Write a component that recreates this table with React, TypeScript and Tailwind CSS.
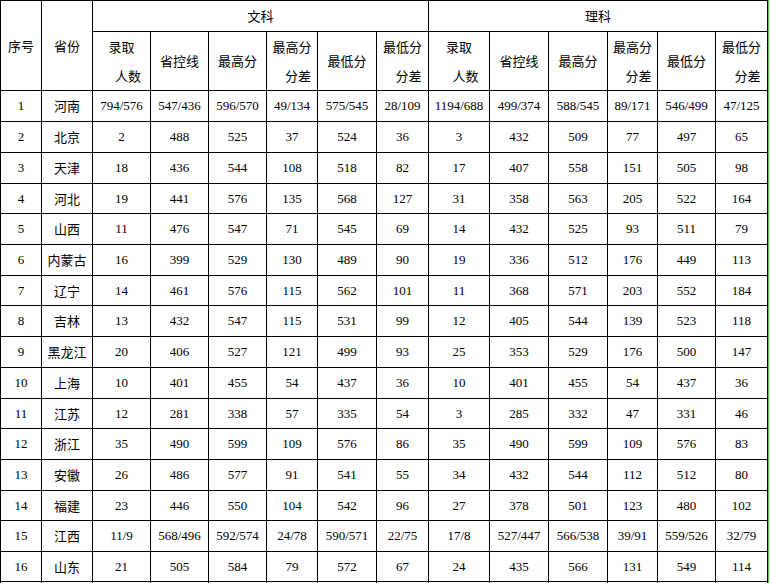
const cn = "font-['Noto_Sans_CJK_SC',sans-serif] text-[13px] text-black";
const num = "font-['Liberation_Serif','Noto_Sans_CJK_SC',serif] text-[13px] text-black";

type Row = [string, string, string[], string[]];

const rows: Row[] = [
  ['1', '河南', ['794/576', '547/436', '596/570', '49/134', '575/545', '28/109'], ['1194/688', '499/374', '588/545', '89/171', '546/499', '47/125']],
  ['2', '北京', ['2', '488', '525', '37', '524', '36'], ['3', '432', '509', '77', '497', '65']],
  ['3', '天津', ['18', '436', '544', '108', '518', '82'], ['17', '407', '558', '151', '505', '98']],
  ['4', '河北', ['19', '441', '576', '135', '568', '127'], ['31', '358', '563', '205', '522', '164']],
  ['5', '山西', ['11', '476', '547', '71', '545', '69'], ['14', '432', '525', '93', '511', '79']],
  ['6', '内蒙古', ['16', '399', '529', '130', '489', '90'], ['19', '336', '512', '176', '449', '113']],
  ['7', '辽宁', ['14', '461', '576', '115', '562', '101'], ['11', '368', '571', '203', '552', '184']],
  ['8', '吉林', ['13', '432', '547', '115', '531', '99'], ['12', '405', '544', '139', '523', '118']],
  ['9', '黑龙江', ['20', '406', '527', '121', '499', '93'], ['25', '353', '529', '176', '500', '147']],
  ['10', '上海', ['10', '401', '455', '54', '437', '36'], ['10', '401', '455', '54', '437', '36']],
  ['11', '江苏', ['12', '281', '338', '57', '335', '54'], ['3', '285', '332', '47', '331', '46']],
  ['12', '浙江', ['35', '490', '599', '109', '576', '86'], ['35', '490', '599', '109', '576', '83']],
  ['13', '安徽', ['26', '486', '577', '91', '541', '55'], ['34', '432', '544', '112', '512', '80']],
  ['14', '福建', ['23', '446', '550', '104', '542', '96'], ['27', '378', '501', '123', '480', '102']],
  ['15', '江西', ['11/9', '568/496', '592/574', '24/78', '590/571', '22/75'], ['17/8', '527/447', '566/538', '39/91', '559/526', '32/79']],
  ['16', '山东', ['21', '505', '584', '79', '572', '67'], ['24', '435', '566', '131', '549', '114']],
  // next row is cut off by the bottom edge of the window
  ['', '', ['', '', '', '', '', ''], ['', '', '', '', '', '']],
];

const cell = 'bg-white flex items-center justify-center whitespace-nowrap';

function SubHeaders() {
  return (
    <>
      <div className={`${cell} flex-col leading-[29px] ${cn}`}>
        <span>录取</span>
        <span className="pl-[13px]">人数</span>
      </div>
      <div className={`${cell} ${cn}`}>省控线</div>
      <div className={`${cell} ${cn}`}>最高分</div>
      <div className={`${cell} flex-col leading-[29px] ${cn}`}>
        <span>最高分</span>
        <span className="pl-3">分差</span>
      </div>
      <div className={`${cell} ${cn}`}>最低分</div>
      <div className={`${cell} flex-col leading-[29px] ${cn}`}>
        <span>最低分</span>
        <span className="pl-3">分差</span>
      </div>
    </>
  );
}

export default function App() {
  return (
    <div className="h-[583px] w-[770px] overflow-hidden bg-white flex">
      <div className="w-[768px] shrink-0 self-start bg-black p-px gap-px grid grid-cols-[40px_50px_57px_57px_57px_50px_58px_51px_60px_58px_58px_49px_57px_51px] grid-rows-[30px_58px_30px_30px_30px_29px_30px_30px_29px_30px_30px_30px_29px_30px_30px_29px_30px_29px_30px]">
        <div className={`${cell} row-span-2 ${cn}`}>序号</div>
        <div className={`${cell} row-span-2 ${cn}`}>省份</div>
        <div className={`${cell} col-span-6 ${cn}`}>文科</div>
        <div className={`${cell} col-span-6 ${cn}`}>理科</div>
        <SubHeaders />
        <SubHeaders />
        {rows.map(([no, prov, wen, li], r) => (
          <div key={r} className="contents">
            <div className={`${cell} ${num}`}>{no}</div>
            <div className={`${cell} ${cn}`}>{prov}</div>
            {[...wen, ...li].map((v, i) => (
              <div key={i} className={`${cell} ${num}`}>
                {v}
              </div>
            ))}
          </div>
        ))}
      </div>
      <div className="w-[2px] h-full border-l border-[#6cbf5c] bg-[#d8f0d2]" />
    </div>
  );
}
